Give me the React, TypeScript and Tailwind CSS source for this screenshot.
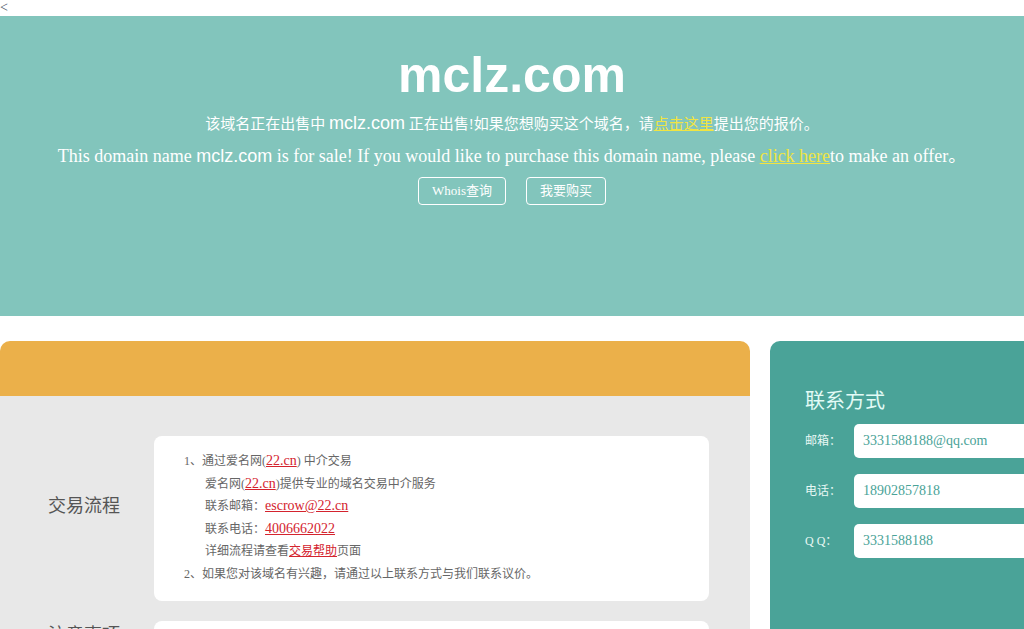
const serif = "font-['Liberation_Serif','Noto_Sans_CJK_SC',serif]"
const sans = "font-['Liberation_Sans','Noto_Sans_CJK_SC',sans-serif]"

function RedLink({ children }: { children: React.ReactNode }) {
    return (
        <a href="#" className="text-[14px] text-[#d4232e] underline">
            {children}
        </a>
    )
}

function Hero() {
    return (
        <section className="h-[300px] bg-[#82c5bc] text-center text-white">
            <h1 className={`${sans} pt-[30px] text-[50px] font-bold leading-[58px]`}>mclz.com</h1>
            <p className="mt-[7px] text-[15px] leading-[24px]">
                该域名正在出售中 <span className={`${sans} text-[18px]`}>mclz.com</span> 正在出售!如果您想购买这个域名，请
                <a href="#" className="text-[#f0e442] underline">点击这里</a>
                提出您的报价。
            </p>
            <p className="mt-[6px] text-[18px] leading-[28px]">
                This domain name <span className={sans}>mclz.com</span> is for sale! If you would like to purchase this
                domain name, please{' '}
                <a href="#" className="text-[#f0e442] underline">click here</a>
                to make an offer。
            </p>
            <div className="mt-[7px] flex justify-center gap-5">
                <a href="#" className="h-[28px] rounded-[4px] border border-white px-[13px] text-[13px] leading-[26px]">
                    Whois查询
                </a>
                <a href="#" className="h-[28px] rounded-[4px] border border-white px-[13px] text-[13px] leading-[26px]">
                    我要购买
                </a>
            </div>
        </section>
    )
}

function TradeCard() {
    return (
        <div className="w-[750px] shrink-0 overflow-hidden rounded-t-[10px]">
            <div className="h-[55px] bg-[#ebb04a]"></div>
            <div className="bg-[#e8e8e8] pt-10 pb-10">
                <div className="flex items-start">
                    <div className="w-[154px] shrink-0 pt-[58px] pl-[14px] text-center text-[18px] leading-6 text-[#555]">
                        交易流程
                    </div>
                    <div className="w-[555px] rounded-[8px] bg-white pt-[14px] pb-[16px] pl-[30px] text-[12px] leading-[22.5px] text-[#666]">
                        <div>
                            1、通过爱名网(<RedLink>22.cn</RedLink>) 中介交易
                        </div>
                        <div className="pl-[21px]">
                            爱名网(<RedLink>22.cn</RedLink>)提供专业的域名交易中介服务
                        </div>
                        <div className="pl-[21px]">
                            联系邮箱：<RedLink>escrow@22.cn</RedLink>
                        </div>
                        <div className="pl-[21px]">
                            联系电话：<RedLink>4006662022</RedLink>
                        </div>
                        <div className="pl-[21px]">
                            详细流程请查看<a href="#" className="text-[#d4232e] underline">交易帮助</a>页面
                        </div>
                        <div>2、如果您对该域名有兴趣，请通过以上联系方式与我们联系议价。</div>
                    </div>
                </div>
                <div className="mt-5 flex items-start">
                    <div className="w-[154px] shrink-0 pt-[2px] pl-[14px] text-center text-[18px] leading-6 text-[#555]">
                        注意事项
                    </div>
                    <div className="h-[120px] w-[555px] rounded-[8px] bg-white"></div>
                </div>
            </div>
        </div>
    )
}

const contacts = [
    { label: '邮箱：', value: '3331588188@qq.com' },
    { label: '电话：', value: '18902857818' },
    { label: 'Q Q：', value: '3331588188' },
]

function ContactPanel() {
    return (
        <aside className="h-[420px] w-[430px] shrink-0 rounded-t-[10px] bg-[#4aa398] pt-[46px] pl-[35px]">
            <h2 className="text-[20px] leading-[28px] text-[#e2fbf6]">联系方式</h2>
            <div className="mt-[9px] flex flex-col gap-4">
                {contacts.map((c) => (
                    <div key={c.label} className="flex items-center">
                        <span className="w-[49px] shrink-0 text-[12px] text-[#e8f8f4]">{c.label}</span>
                        <div className="h-[34px] w-[300px] rounded-[5px] bg-white pl-[9px] text-[14px] leading-[34px] text-[#4aa398]">
                            {c.value}
                        </div>
                    </div>
                ))}
            </div>
        </aside>
    )
}

export default function App() {
    return (
        <div className={`${serif} h-screen overflow-hidden bg-white`}>
            <div className="h-4 text-[14px] leading-4 text-gray-600">&lt;</div>
            <Hero />
            <div className="mt-[25px] flex w-[1200px] items-start gap-5">
                <TradeCard />
                <ContactPanel />
            </div>
        </div>
    )
}
